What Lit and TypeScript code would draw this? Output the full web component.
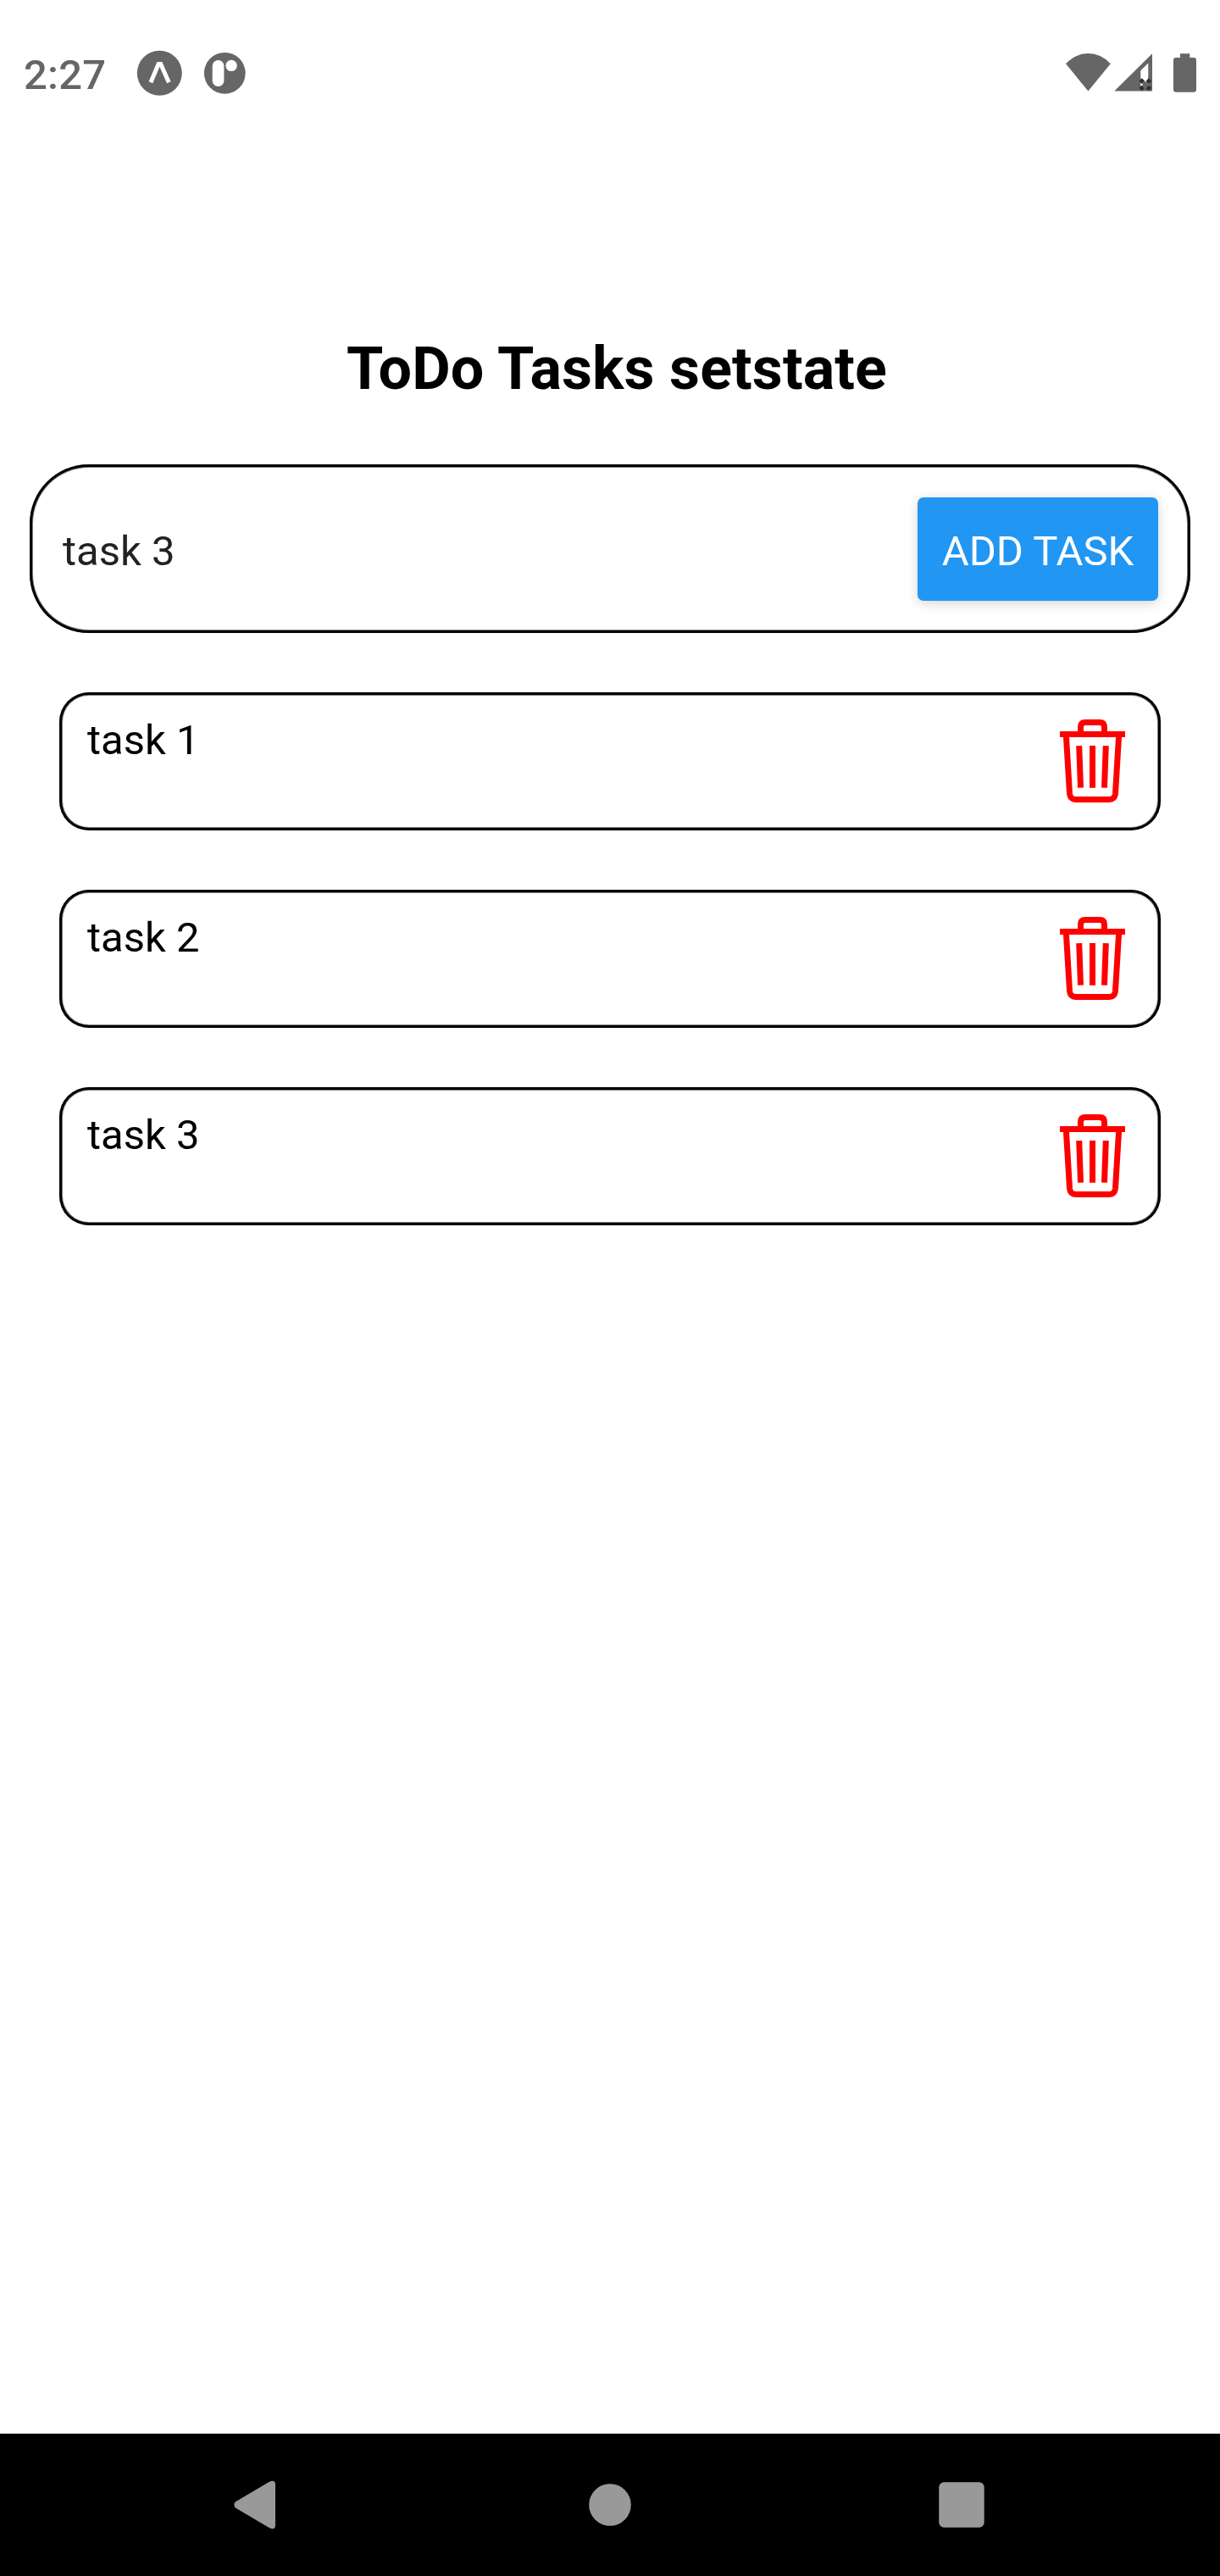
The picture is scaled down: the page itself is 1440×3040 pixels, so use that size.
import { LitElement, html, css } from "lit";
import { customElement, property, state } from "lit/decorators.js";

@customElement("status-bar")
class StatusBar extends LitElement {
  static styles = css`
    :host { display: flex; justify-content: space-between; align-items: flex-start; height: 173px; padding: 0 28px; box-sizing: border-box; color: #666; }
    .left, .right { display: flex; }
    .clock { font: 500 49px/57px Roboto, sans-serif; letter-spacing: .2px; margin-top: 60px; width: 132px; white-space: nowrap; }
    .notices { display: block; margin-top: 58px; }
    .signals { display: block; margin-top: 58px; }
  `;
  render() {
    return html`
      <div class="left">
        <div class="clock">2:27</div>
        <svg class="notices" width="132" height="56" viewBox="160 58 132 56">
          <circle cx="188.3" cy="86.3" r="26.5" fill="#666" />
          <path d="M177.9 97.3 187.1 75.5H189.7L199.3 97.3" fill="none" stroke="#fff" stroke-width="5" />
          <circle cx="265.3" cy="86.3" r="24.4" fill="#666" />
          <rect x="250.7" y="71" width="13.7" height="31" rx="6.8" fill="#fff" />
          <circle cx="273.1" cy="77.4" r="6.7" fill="#fff" />
        </svg>
      </div>
      <div class="right">
        <svg class="signals" width="156" height="56" viewBox="1256 58 156 56">
          <path d="M1284.4 107.5 1258 75.2Q1269.5 63.1 1284.4 63.1T1310.8 75.2Z" fill="#666" />
          <path d="M1315.3 107.6 1360 63.2V107.6ZM1346.3 83.3V103H1355.3V74.5Z" fill="#666" fill-rule="evenodd" />
          <path d="M1347 94.5 1357.3 105M1357.3 94.5 1347 105" stroke="#666" stroke-width="4.5" />
          <path d="M1346 94 1349 97M1357.5 94 1354.5 97M1346 105.500 1349 102.500M1357.500 105.500 1354.500 102.500" stroke="#2e2e2e" stroke-width="4.6" />
          <path d="M1393 63.3h11.3V68h4.7a3 3 0 0 1 3 3v34.7a3 3 0 0 1-3 3h-21a3 3 0 0 1-3-3V71a3 3 0 0 1 3-3h5Z" fill="#666" />
        </svg>
      </div>`;
  }
}

@customElement("task-input")
class TaskInput extends LitElement {
  static styles = css`
    :host { display: flex; justify-content: space-between; align-items: center; box-sizing: border-box; height: 199px; margin: 0 35px; padding: 0 38px 0 39px; border-radius: 70px; box-shadow: inset 0 0 0 3px #000, inset 0 0 0 4px rgba(0,0,0,.5); }
    .value { font: 400 49px/57px Roboto, sans-serif; color: #222; padding-top: 5px; }
    .add { display: flex; align-items: center; justify-content: center; width: 284px; height: 122px; padding: 6px 0 0; box-sizing: border-box; border: 0; border-radius: 7px; background: #2196f3; color: #fff; font: 400 49px/57px Roboto, sans-serif; white-space: nowrap; box-shadow: 0 5px 14px rgba(0,0,0,.1), 0 0 12px rgba(0,0,0,.08); }
  `;
  @property() value = "";
  render() {
    return html`<div class="value">${this.value}</div><button class="add">ADD TASK</button>`;
  }
}

@customElement("task-row")
class TaskRow extends LitElement {
  static styles = css`
    :host { display: flex; justify-content: space-between; align-items: flex-start; box-sizing: border-box; height: 163px; padding: 27px 42px 0 33px; border-radius: 35px; box-shadow: inset 0 0 0 3px #000, inset 0 0 0 4px rgba(0,0,0,.5); }
    .label { font: 400 49px/57px Roboto, sans-serif; color: #000; margin-top: 1px; }
    .trash { display: block; margin-top: 5px; }
  `;
  @property() label = "";
  render() {
    return html`<div class="label">${this.label}</div>
      <svg class="trash" width="77" height="98" viewBox="0 0 77 98" fill="none" stroke="#f00" stroke-width="7">
        <path d="M0 17.5H77" />
        <path d="M24.5 17V9Q24.5 3.5 30 3.5H47Q52.5 3.5 52.5 9V17" />
        <path d="M7.3 18 11.5 87.5Q12.2 94.5 18.7 94.5H58.3Q64.8 94.5 65.5 87.5L69.7 18" />
        <path d="M22.7 31.1 24.5 80.7M38.5 31.1V80.7M54.3 31.1 52.5 80.7" />
      </svg>`;
  }
}

@customElement("nav-bar")
class NavBar extends LitElement {
  static styles = css`
    :host { display: flex; height: 168px; background: #000; gap: 362px; align-items: center; padding-left: 275px; box-sizing: border-box; }
    .icon { display: block; fill: #999; flex: none; }
  `;
  render() {
    return html`
      <svg class="icon" width="57" height="60" viewBox="275 2926 57 60"><path d="M277.8 2952.5 318.5 2928.5Q325 2925.8 325 2932V2980Q325 2986.2 318.5 2983.5L277.8 2959.5Q274.8 2956 277.8 2952.5Z" /></svg>
      <svg class="icon" width="52" height="50" viewBox="0 0 52 50"><circle cx="26" cy="25" r="24.8" /></svg>
      <svg class="icon" width="54" height="54" viewBox="0 0 54 54"><rect x=".3" y=".3" width="53.4" height="53.4" rx="6" /></svg>`;
  }
}

@customElement("app-root")
class AppRoot extends LitElement {
  static styles = css`
    :host { display: flex; flex-direction: column; width: 1440px; height: 3040px; background: #fff; overflow: hidden; }
    .title { margin: 221px 0 0; height: 154px; padding-left: 16px; text-align: center; font: 700 70px/82px Roboto, sans-serif; letter-spacing: .1px; color: #000; white-space: nowrap; }
    .list { flex: 1; display: flex; flex-direction: column; gap: 70px; padding: 70px 70px 0; }
  `;
  @state() tasks = ["task 1", "task 2", "task 3"];
  render() {
    return html`
      <status-bar></status-bar>
      <h1 class="title">ToDo Tasks setstate</h1>
      <task-input value="task 3"></task-input>
      <div class="list">${this.tasks.map((t) => html`<task-row .label=${t}></task-row>`)}</div>
      <nav-bar></nav-bar>`;
  }
}
